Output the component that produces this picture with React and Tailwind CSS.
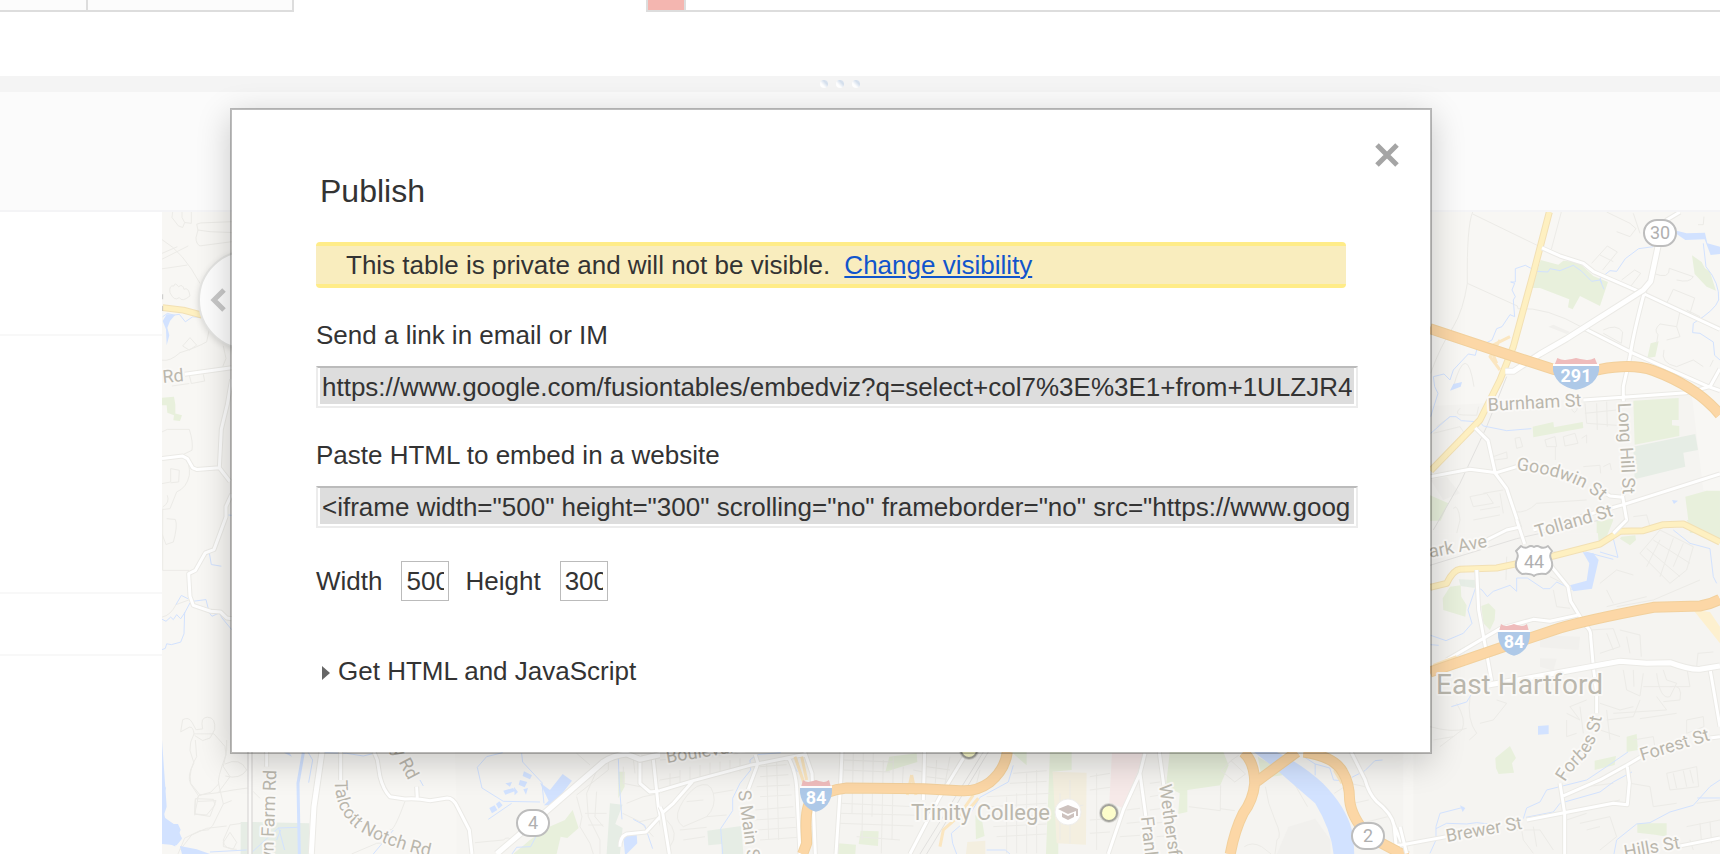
import React from "react";

const LINE = {
  minor: [["#ecebe7", 1]],
  stream: [["#d2e2ff", 1]],
  creek: [["#d2e2ff", 3]],
  rail: [["#e2e1df", 1]],
  street: [["#ebeae6", 5], ["#ffffff", 3]],
  avenue: [["#ebeae6", 7], ["#ffffff", 5]],
  ramp: [["#fbe6c0", 3]],
  yellow: [["#f2e0b4", 7], ["#fef0c1", 5]],
  highway: [["#f2d09c", 9], ["#fcd7a6", 7]],
  freeway: [["#f2d09c", 11], ["#fcd7a6", 9]],
};

function Line({ kind, d }) {
  return LINE[kind].map(([color, width]) => (
    <path
      key={color}
      d={d}
      fill="none"
      stroke={color}
      strokeWidth={width}
      strokeLinejoin="round"
      vectorEffect="non-scaling-stroke"
    />
  ));
}

const Park = ({ d }) => <path d={d} fill="#e8f0dc" />;
const Wood = ({ d }) => <path d={d} fill="#e6ede5" />;
const Water = ({ d }) => <path d={d} fill="#d2e2ff" />;
const Block = ({ d }) => <path d={d} fill="#f1f0ed" />;

function Label({ x, y, size = 18, rotate = 0, children }) {
  return (
    <text
      x={x}
      y={y}
      transform={`rotate(${rotate} ${x} ${y})`}
      fontSize={size}
      fill="#bab7ad"
      stroke="#faf9f7"
      strokeWidth="4"
      strokeLinejoin="round"
      paintOrder="stroke"
    >
      {children}
    </text>
  );
}

function CurvedLabel({ id, d, children }) {
  return (
    <>
      <path id={id} d={d} fill="none" />
      <text fontSize="18" fill="#bab7ad" stroke="#faf9f7" strokeWidth="4" strokeLinejoin="round" paintOrder="stroke">
        <textPath href={`#${id}`}>{children}</textPath>
      </text>
    </>
  );
}

function Interstate({ x, y, wide, children }) {
  return (
    <g transform={`translate(${x} ${y})`}>
      <g transform={wide ? "scale(.48 .333)" : "scale(.333)"}>
        <path d="M0 17H96V24H0Z" fill="#fff" />
        <path d="M4 18L9 0Q20 8 29 5Q40 4 48 0Q56 4 67 5Q76 8 87 0L92 18Z" fill="#efbcbc" />
        <path d="M0 24H96Q98 52 82 74Q68 90 48 95Q28 90 14 74Q-2 52 0 24Z" fill="#aec9e8" />
      </g>
      <text x={wide ? 23 : 16} y="24" textAnchor="middle" fontSize="18" fontWeight="700" fill="#fff">
        {children}
      </text>
    </g>
  );
}

function Route({ x, y, children }) {
  return (
    <g>
      <rect x={x - 16} y={y - 13} width="32" height="26" rx="13" fill="#fff" stroke="#bdbdbd" strokeWidth="2" />
      <text x={x} y={y + 6} textAnchor="middle" fontSize="18" fill="#b0b0b0">
        {children}
      </text>
    </g>
  );
}

function Marker({ x, y }) {
  return (
    <>
      <circle cx={x} cy={y} r="9" fill="none" stroke="#d5d4d0" strokeWidth="2" />
      <circle cx={x} cy={y} r="8" fill="#fdfdcb" stroke="#a3a39c" strokeWidth="2" />
    </>
  );
}

function WestMap() {
  return (
    <g transform="translate(150 200) scale(.3333 .4171)">
      <Line kind="minor" d="M68 28L66 42L85 62L98 66L104 54L124 56V28M104 54L96 42V28M140 58L152 55L245 52M140 58L144 72L180 76L245 78M144 72L138 90Q138 106 150 110L245 100M36 95Q100 125 150 200M36 142L115 110M36 165L112 156M36 128L82 112M60 222Q56 204 72 206Q74 196 86 208Q98 200 102 214Q116 208 120 230Q96 246 88 234Q72 244 60 222M36 384Q60 388 90 366Q140 354 170 340L178 310M98 350L120 330L140 348L118 360ZM220 350L228 380L218 400M118 420L124 440L164 434L160 418M66 446L118 440M36 556L52 550H118Q130 580 126 600L100 610M36 680L62 676V644L88 648L86 676L62 678M100 615Q122 630 118 660Q110 690 80 700L60 740L38 742M50 764L76 766Q84 780 70 820L48 826L36 800M52 708Q60 726 38 736M38 740V888H118M36 1000Q62 996 78 970L120 958M132 1280Q118 1300 120 1320L132 1350Q110 1380 122 1400L145 1428L182 1420L206 1400Q200 1390 228 1330L225 1310L192 1280ZM132 1280Q130 1262 118 1264L92 1275L98 1246Q116 1238 126 1252L138 1270L158 1268Q150 1240 172 1240Q198 1240 194 1270L180 1290L158 1296L134 1284M145 1428L142 1442L198 1440L180 1478L134 1472L142 1442M206 1400L220 1448L245 1440M220 1448L188 1500L175 1510L150 1512L104 1530L84 1568M220 1540L240 1516L260 1540L250 1556L220 1550Z" />
      <Park d="M36 474L72 472L76 490L76 512L96 516L90 530L70 528L72 516L52 510L50 492L36 492Z" />
      <Line kind="stream" d="M38 280L52 272L72 276L88 274L106 292L128 280L158 282M36 1005L48 1010L62 1000L70 1006L80 994L92 1004L104 990M104 990L120 966M78 970L94 948L114 956M104 988L102 1040L92 1060L64 1066L50 1064L46 1075L36 1078M130 962L168 958L178 990L186 998L208 990L216 1002L245 1030M178 846L184 874L214 878M245 756L232 755" />
      <Water d="M38 290L50 274L76 275L60 290L52 306L58 324L50 348L48 310ZM36 1352L42 1370L40 1400L48 1410L40 1430L42 1470L50 1496H84L92 1510L86 1522L96 1530L78 1528L76 1550L36 1536ZM90 1550L140 1562L180 1580H100Z" />
      <Line kind="street" d="M104 418L245 402M36 620L98 614L112 620L128 642L140 646L208 642L240 675M245 430L232 490L214 550L208 642M245 705L228 735V760L192 838L166 846L136 888L116 896L120 950L130 972L182 986L212 988L230 1002L245 1004" />
      <Line kind="yellow" d="M38 258L100 264L156 276" />
      <path d="M38 226V238M38 254V266" stroke="#b8b8b8" strokeWidth="2" />
    </g>
  );
}

function SouthWestMap() {
  return (
    <g transform="translate(160 740) scale(.3333)">
      <path d="M890 205L885 36H1560V342H890Z" fill="#f6f5f2" />
      <Wood d="M242 246H280L448 250V342H242Z" />
      <Wood d="M1350 190L1388 194L1366 252L1388 264L1380 342H1340Z" />
      <Park d="M1375 95H1394V140L1375 175ZM1165 262L1215 240L1238 210L1256 264L1222 294L1202 290L1190 342H1060L1110 300Z" />
      <Line kind="minor" d="M106 0L110 50Q85 90 92 130L120 165L175 158L210 110L190 80L200 30V0M195 72Q240 50 260 90Q240 120 196 108M106 176L160 178L165 195L140 225L104 222ZM120 165L106 180L104 226M175 158L220 150L264 144M245 250L210 255L190 300Q190 330 230 328M60 330L95 285L140 265L200 258M280 155L300 175M735 184Q700 280 690 268M575 342L650 310L700 308M945 308L1030 300Q1045 285 1060 306L1045 320M1250 170L1266 230L1260 260L1290 310L1300 342M1280 160L1285 230L1320 300V342M1310 155L1305 230L1330 260M1345 60V90L1250 165M1320 70L1280 160M1275 220H1340M1285 255H1330M1390 80V130L1440 140M1400 190L1450 170L1500 160M1388 220L1440 245L1500 230M1440 245L1480 290M1500 120L1520 200L1560 220M1420 55L1425 100M1250 40L1290 75" />
      <Line kind="stream" d="M490 38L560 40L610 48L650 38M445 38L458 60L446 128M270 342L355 264L416 262M150 336L260 330M356 264L374 330M362 270L350 300M1028 38L980 50L952 82L966 144L1030 184L1140 186M985 238L1055 190M1085 40L1088 66L1146 128L1152 190M1375 50L1378 130L1386 238M1056 342L1070 322L1112 320L1128 290M1420 238L1454 256L1478 326M640 342L700 270M780 120L790 138" />
      <Line kind="creek" d="M430 38L414 130L418 342" />
      <Water d="M6 0L20 200L10 230L50 258L66 296L50 316L6 312ZM60 318L110 328L150 342H70ZM1140 128L1170 150L1208 102L1236 122L1180 196L1152 196L1166 182ZM1390 290L1430 280L1432 310L1400 342H1395ZM1092 94L1116 106L1110 118L1088 108ZM1080 120L1102 126L1094 142L1076 134ZM1036 130L1056 126L1050 140ZM1030 152L1060 144L1064 154L1036 164ZM1062 140L1074 156L1064 166ZM1090 148L1104 144L1098 164ZM988 204L1004 196L1012 210L996 220ZM1008 192L1018 184L1028 196L1016 206ZM372 38L396 50L388 38Z" />
      <path d="M270 36V342" stroke="#dcdbd9" strokeWidth="16" />
      <path d="M270 36V342" stroke="#fbfaf8" strokeWidth="8" />
      <Line kind="avenue" d="M486 36L462 200L454 342" />
      <Line kind="street" d="M320 36V80M542 36V120M642 36L652 60L660 110Q670 150 690 170L735 177Q770 174 810 182L862 174Q880 174 892 200L928 270L936 342M772 176L770 140M1440 44V130L1470 156L1490 154L1560 136M1478 38L1495 200L1525 342M1560 165L1458 276L1400 282Q1380 290 1380 320" />
      <Line kind="avenue" d="M1010 342L1150 222L1330 66Q1360 46 1400 42L1440 58L1560 30" />
    </g>
  );
}

function SouthMap() {
  return (
    <g transform="translate(660 740) scale(.3333)">
      <path d="M0 36H1560V342H0Z" fill="#f5f4f1" />
      <Wood d="M142 272L244 258L250 342H185L186 312L145 316Z" />
      <Park d="M688 50L770 40L772 66L720 82L676 96ZM602 272L656 274L654 318L596 312ZM535 310L588 314L586 342H532ZM946 225L966 240L974 288L948 298ZM1170 36H1235V90L1178 95L1195 160V342H1158ZM1054 36H1100V76Z" />
      <path d="M1178 95L1280 98L1278 314L1190 310ZM922 306L976 302V342H918Z" fill="#f4efe0" />
      <path d="M1356 40H1455L1390 205L1348 188Z" fill="#f6e9e8" />
      <Line kind="minor" d="M0 120L60 110M30 100V140M60 90V130M90 80V122M120 75V115M150 68V108M180 65V105M210 60V100M240 55V95M0 60L240 40M110 140Q150 120 160 160T140 230L70 260Q40 240 60 200T110 140M160 160L220 150M130 180L80 185M140 230L200 225M20 240Q60 280 30 320M60 270L140 262M70 300L135 290M300 80L380 74M300 110L385 104M290 140L390 135M300 170L395 165M320 66L326 300M350 60L356 300M286 210L400 200M284 240L405 232M290 270L410 262M300 300L415 292M550 60L700 66M550 90L690 96M580 40L576 220M610 40L606 300M640 40L636 230M670 60L664 340M700 50L696 300M545 190L760 200M540 220L780 226M540 250L760 258M590 290L720 300M730 80L726 160M760 90L790 96M800 80L870 90M800 110L860 118M830 60L826 130M870 50L850 160M960 90L950 130M980 170L1170 160M990 200L1160 190M1000 230L1160 226M1000 260L1160 252M1010 290L1160 282M1040 170V340M1070 160V340M1100 100V340M1130 90V340M1060 100L1160 92M1050 130L1160 124M1200 160V300M1230 120V310M1200 200L1270 196M1290 110L1350 100M1290 150L1350 142M1290 240L1350 236M1290 280L1350 276M1310 100V330M1400 210L1440 205M1400 250L1440 246M1380 290L1440 286M1470 130L1500 126M1470 170L1495 166M1470 210L1500 206M1480 250L1520 246M1490 290L1540 286" />
      <Line kind="rail" d="M970 36L780 342M985 36L800 342" />
      <Line kind="stream" d="M390 52L412 96M408 48L418 84M362 38L290 44L270 60L272 90L240 130L218 175V212L182 266L188 342M458 200V280M1060 76L1045 126L960 172L920 240L874 280L878 310L890 342M980 330H1036L1050 342" />
      <Line kind="street" d="M0 152L100 122L270 76L440 42M98 124L40 190L8 218L0 200M8 218L28 342M286 44L294 70L262 156M384 50Q406 90 410 140L420 342M434 36L456 100L466 342M546 36L542 130L528 342M794 36L790 180M918 42L840 170L750 342M1455 40L1440 100L1390 210L1345 342M1440 100L1458 232M1498 36L1512 140" />
      <Line kind="ramp" d="M405 50L432 130M425 50L440 120M755 105L768 165M755 105L742 165M940 165L895 230L850 270L840 320M955 175L900 240" />
      <Line kind="freeway" d="M1042 36Q1035 90 988 128Q950 156 900 152L790 146L560 144Q530 146 500 158M450 190Q438 200 438 260L440 310L428 342" />
    </g>
  );
}

function SouthCentralMap() {
  return (
    <g transform="translate(1120 740) scale(.3827 .3333)">
      <path d="M157 36H740V342H157Z" fill="#f5f4f1" />
      <Park d="M130 36H270L284 76L262 136L176 150V216L152 222L156 160L120 140Z" />
      <Park d="M360 50L420 90L424 106L370 114Z" />
      <Block d="M440 260L510 236L550 300V342H410Z" />
      <Line kind="minor" d="M263 136L262 212L180 200M262 206L300 212M264 92L290 62L328 102L300 126L264 92M290 62L310 46M380 140Q385 190 405 240T410 300L405 342M325 320Q345 304 370 320L395 342M560 160L600 130L640 140M610 190L650 180M630 250L700 230M430 80L490 200" />
      <Water d="M350 36H410Q480 76 530 130Q590 200 606 270Q612 310 612 342H558Q552 270 510 190Q450 130 400 80Z" />
      <Line kind="stream" d="M480 50L510 72V106M510 72L548 84L558 120L600 124M606 112L640 92L666 62L686 60M826 342L815 342" />
      <Line kind="street" d="M604 36L640 118Q650 160 670 184Q710 220 716 256L722 324M716 256L740 320L750 342M720 318L740 312" />
      <Line kind="ramp" d="M570 110L600 135M560 90L580 130" />
      <Line kind="freeway" d="M322 36Q352 66 352 130Q348 180 322 220Q300 270 288 342M462 36L358 124" />
      <Line kind="freeway" d="M480 36Q560 50 582 96Q600 130 600 180Q604 230 648 288L750 350" />
    </g>
  );
}

function NorthEastMap() {
  return (
    <g transform="translate(1400 200) scale(.3333)">
      <path d="M90 618L875 580L910 870L960 880V1000H90Z" fill="#f5f4f1" />
      <Park d="M422 180L475 194L490 182L535 186L580 228L624 246L600 318L540 288L518 328L504 322L508 298L420 264L396 264ZM876 166L905 186L915 205L930 215L948 272L920 260L884 222ZM752 430L776 424L766 470L742 474ZM398 680L460 666L462 682L548 666L550 684L400 712ZM700 602L836 594V660L816 660V676L838 678V708L704 734ZM90 886L145 910L122 962H90ZM856 890L920 872H960V1000H870ZM590 962L640 956L620 1000H590Z" />
      <Wood d="M700 740L886 702L894 750L850 758L856 800L704 838Z" />
      <Block d="M445 380L460 374L510 396L500 402ZM92 840L140 830L180 880L130 900Z" />
      <Line kind="minor" d="M218 36Q200 80 202 250Q190 330 160 380Q120 440 92 520M218 42L428 144M202 250L352 318L354 326Q440 320 550 384M484 36L454 148M160 560Q200 420 222 560M620 36L690 70L708 86L690 110L650 95M700 40L720 100M894 74L910 74L912 50M575 190L622 138L652 156L608 210M600 165L640 185M665 240L704 210L722 220L690 262M760 220Q810 240 808 205L880 230Q870 250 830 240M800 310L820 268L884 294L870 340L840 335L830 380L780 372Q760 390 774 404L770 430M830 380L840 410L800 420M792 450Q780 490 830 500L880 480L910 500M610 390Q650 370 668 396L664 430L610 400M555 610L560 670L650 676M590 610L592 690M620 605L622 680M555 640L650 630M490 710L525 700L534 730L495 738ZM545 715L560 705V730M435 720L465 710L470 740H440ZM466 740V780M345 715L360 712L368 740L350 745ZM280 770L320 756L322 775L285 780M550 800L600 796L602 820M610 800L630 790L634 810M210 890L260 880L280 910L220 920ZM240 930L300 920M250 880L310 870M160 925Q175 910 180 960L170 1000M220 960L300 945M300 880L310 940M345 936Q380 940 410 910L560 900M500 990L520 960L560 955M690 910L760 890M700 950L740 945L750 980M860 330L900 350M930 500L940 480M100 700L180 680L200 710M110 680L150 650M180 625Q160 645 190 645L230 646L236 620M510 615Q525 660 535 615" />
      <Line kind="rail" d="M320 530L260 680L180 850L100 990" />
      <Line kind="stream" d="M344 350L340 300L346 290L336 270L344 250L332 246H346V206L376 196L410 214L444 216L450 206L480 212L520 196L545 214L575 244L600 240L612 268M606 250L600 236L630 212L650 214L676 176L716 146L760 140M344 350L330 344L306 380L290 386L276 420L256 430L230 450L226 466L205 462L160 510L150 540L132 522L100 530L104 560L114 580L92 650M910 130L918 200Q960 250 956 300Q946 330 880 370L878 398L900 400L940 426L944 466L960 480M92 700L150 650L168 650L184 662L240 666L250 678L320 692L394 686" />
      <Water d="M830 92L860 100L915 98L922 130L960 140V162L932 165L914 118L856 120L830 102ZM150 572L160 552L186 546L182 560ZM816 900L834 902L822 912Z" />
      <Line kind="yellow" d="M448 36L400 220L340 440L300 540L240 660L92 812" />
      <Line kind="ramp" d="M270 440L330 410M270 440L290 490M300 420L270 470L300 510" />
      <Line kind="street" d="M426 144L480 168L550 190L582 216L720 276L960 388M550 384L700 460L920 558L960 572M840 36L800 60L780 90M735 270Q700 400 690 470L670 560V604M676 840L668 890L680 960L650 990M550 600L860 578L930 560L960 506M226 684L264 722L286 820L320 866L360 985M92 830L210 808L290 818L350 800M600 870L630 888L668 892M400 990L670 914L960 822" />
      <Line kind="avenue" d="M776 130L752 244L730 270L500 416L420 462L340 514H316" />
      <Line kind="freeway" d="M90 386L300 456L460 508Q540 524 600 508Q700 490 760 512Q890 560 960 644" />
    </g>
  );
}

function SouthEastMap() {
  return (
    <g transform="translate(1400 520) scale(.3333)">
      <path d="M90 40H960V1002H40V700H90Z" fill="#f5f4f1" />
      <Park d="M590 0H640L620 50L596 66ZM860 0H960V70L870 20ZM664 50L706 46L708 60L690 76L660 56ZM150 200L182 196L184 230L200 256L196 290L130 270L128 235ZM244 258L266 250L286 270L284 300L270 330L250 310ZM286 714L330 678L348 714L336 730L342 758L296 762L288 745ZM680 650L710 642L714 690L680 696ZM584 722L648 708L644 735L584 750ZM712 910H800V950L766 944L712 938Z" />
      <Wood d="M176 178L228 180L224 204L182 198Z" />
      <Block d="M420 346L540 350L536 390L420 382ZM420 415L470 416L460 452L420 440Z" />
      <Line kind="minor" d="M720 100L780 30L880 80L860 150L810 190ZM740 85L840 170M760 60L870 130M780 60L740 140M820 55L780 170M850 70L820 140M600 190L650 150L700 165M620 210L640 250M450 170L500 195M460 210L470 260L510 265M570 330L640 326L660 380L600 400M620 340L640 390M660 330L720 345L724 410M680 350L690 400M670 450L680 510L720 528L730 460M700 450L702 500M770 460Q780 540 810 530L830 490L800 480L790 450M810 500Q850 490 840 540L790 545M500 580L540 600L510 560L560 540M600 550L660 570L700 560M620 600L700 590L720 540M500 600V650L530 640M540 560L550 640M600 630L660 650M620 570L630 660M640 580L800 570L770 530M720 596L830 580M730 500L870 500L860 440M890 440L894 400L940 396M860 600L910 590L912 620L860 640ZM800 760L890 740L896 800L810 810ZM820 760L830 805M850 752L860 800M870 750L880 790M690 790L750 800L760 860L830 850M700 660L760 650L770 720M560 800L640 790M570 860L660 840M540 910L630 890L650 950L600 990M560 930L600 920M340 930L420 930L460 990M360 900L370 960L400 1000M400 920L410 980M500 900L560 880M860 920L960 900M870 960L880 990M890 850L960 840M900 910L905 970M930 905L935 970M170 550Q200 600 186 630L120 680M210 530Q200 600 230 640L208 660M290 540L320 550L280 600L240 610M90 620Q160 640 200 625M100 660L160 650M270 410L300 400M320 110L318 180M420 90L500 100M650 260L760 240L900 180M620 260L740 230" />
      <Line kind="rail" d="M90 136L350 56L600 0" />
      <Line kind="stream" d="M230 200L246 210L262 230L280 214L330 196L350 214V174L382 174L430 206L450 206L470 186L520 210M556 96L640 118M640 56L654 112L600 96M92 346L138 362L190 340L216 310L204 270L228 200M92 374L116 376M820 30L870 70L930 86L940 170L950 190M154 560L200 546L216 520M684 696L620 740L560 780L440 810L420 846L380 864L370 896M696 756L640 786L600 816L480 850L460 876L378 892M120 880L190 862M120 880L108 920V960L90 1000M108 926L140 910L200 912L230 908L300 916M960 780L930 800L880 856L810 876L750 908L710 912L650 960L642 1002M892 834H960" />
      <Water d="M548 96L580 100L596 120L576 206L520 214L510 196L560 182L568 130ZM414 618L446 616V642L414 644ZM180 856L196 864L188 876Z" />
      <Line kind="yellow" d="M90 202L140 190Q160 150 180 148L290 144L460 108L600 72L660 34L730 32L790 14L850 12L960 66" />
      <Line kind="street" d="M350 0L374 72M200 90L320 30L356 22M455 140L504 200L512 244L556 316Q574 330 572 350L580 440L590 520V580M230 150L236 270L278 500M140 420L300 326L400 298L450 304L540 284M640 40L680 0M480 790L494 880V1002M490 828L600 780L680 736L730 706M682 740L688 788L682 854L640 850L380 900M0 976L140 950M930 654L960 650M0 920L20 1000M930 446L960 620M830 980L960 954" />
      <Line kind="avenue" d="M260 496L420 468L660 424L740 430L810 428Q870 450 900 448L960 438" />
      <path d="M880 270L930 276L960 320V370Z" fill="#fdf0cf" />
      <Line kind="ramp" d="M100 436L170 410" />
      <Line kind="freeway" d="M90 456L300 384L480 324Q560 300 760 262L900 258Q930 254 960 238" />
    </g>
  );
}

function MapCanvas() {
  return (
    <svg
      viewBox="162 212 1558 642"
      preserveAspectRatio="xMinYMin slice"
      className="absolute inset-0 h-full w-full font-['Roboto',sans-serif]"
      role="img"
      aria-label="Map"
    >
      <rect x="162" y="212" width="1558" height="642" fill="#f8f7f4" />
      <WestMap />
      <SouthWestMap />
      <SouthMap />
      <SouthCentralMap />
      <NorthEastMap />
      <SouthEastMap />

      <Label x={163} y={383} rotate={-5}>Rd</Label>
      <Label x={273} y={865} rotate={-88}>wn Farm Rd</Label>
      <Label x={382} y={731} rotate={62}>ntry Rd</Label>
      <CurvedLabel id="talcott" d="M335 780Q334 812 358 830Q395 852 450 860">Talcott Notch Rd</CurvedLabel>
      <Label x={667} y={763} rotate={-9}>Boulevard</Label>
      <Label x={738} y={791} rotate={82}>S Main St</Label>
      <Label x={627} y={878} rotate={-84}>Rd</Label>
      <Label x={911} y={820} size={22}>Trinity College</Label>
      <Label x={1159} y={785} rotate={82}>Wethersfield</Label>
      <Label x={1141} y={817} rotate={84}>Franklin</Label>
      <Label x={1488} y={411} rotate={-3}>Burnham St</Label>
      <Label x={1618} y={403} rotate={87}>Long Hill St</Label>
      <CurvedLabel id="goodwin" d="M1516 470Q1555 474 1581 487Q1597 496 1610 509">Goodwin St</CurvedLabel>
      <Label x={1537} y={538} rotate={-16}>Tolland St</Label>
      <Label x={1419} y={560} rotate={-11}>Park Ave</Label>
      <Label x={1436} y={694} size={28}>East Hartford</Label>
      <CurvedLabel id="forbes" d="M1565 782Q1572 770 1586 757Q1598 740 1602 716">Forbes St</CurvedLabel>
      <Label x={1642} y={761} rotate={-17}>Forest St</Label>
      <Label x={1447} y={842} rotate={-10}>Brewer St</Label>
      <Label x={1625} y={858} rotate={-10}>Hills St</Label>

      <Interstate x={1553} y={358} wide>291</Interstate>
      <Interstate x={1498} y={624}>84</Interstate>
      <Interstate x={800} y={780}>84</Interstate>
      <Route x={1660} y={233}>30</Route>
      <Route x={533} y={823}>4</Route>
      <Route x={1368} y={836}>2</Route>
      <g>
        <path
          d="M1521 546Q1525 549 1528 547Q1531 545 1534 547Q1537 545 1540 547Q1544 549 1548 546L1552 551Q1549 555 1551 559Q1555 569 1546 574Q1537 573 1534 576Q1531 573 1522 574Q1513 569 1517 559Q1519 555 1516 551Z"
          fill="#fff"
          stroke="#bdbdbd"
          strokeWidth="2"
          strokeLinejoin="round"
        />
        <text x="1534" y="568" textAnchor="middle" fontSize="18" fill="#b0b0b0">44</text>
      </g>
      <circle cx="1068" cy="812" r="13" fill="#fff" stroke="#efeeec" strokeWidth="1" />
      <path d="M1058 809L1068 805L1078 809V816H1076V811L1068 814ZM1062 813L1068 816L1074 813V817L1068 820L1062 817Z" fill="#cdc2be" />
      <Marker x={969} y={750} />
      <Marker x={1109} y={813} />
    </svg>
  );
}

function EmbedField({ id, label, value }) {
  return (
    <div className="flex w-[calc(100%+12px)] flex-col gap-3.5">
      <label htmlFor={id} className="leading-[34px]">{label}</label>
      <input
        id={id}
        readOnly
        defaultValue={value}
        className="h-[42px] w-full rounded-none border-2 border-[#ececec] border-t-[#bbbbbb] bg-[#dddddd] px-1 py-0 leading-8 shadow-[inset_2px_0_#ffffff,inset_-2px_0_#ffffff,inset_0_-2px_#ffffff] outline-none"
      />
    </div>
  );
}

function SizeField({ id, label, value }) {
  return (
    <div className="flex items-center gap-[19px]">
      <label htmlFor={id}>{label}</label>
      <input
        id={id}
        defaultValue={value}
        className="h-10 w-12 rounded-none border border-[#bbbbbb] bg-white px-1 py-0 outline-none"
      />
    </div>
  );
}

function PublishDialog() {
  return (
    <section
      role="dialog"
      aria-labelledby="publish-title"
      className="absolute top-[108px] right-72 left-[230px] border-2 border-black/25 bg-white bg-clip-padding px-[84px] pt-[61px] pb-[65px] text-[26px] leading-8 text-[#333333] shadow-[0_8px_32px_rgba(0,0,0,0.2)]"
    >
      <button type="button" aria-label="Close" className="absolute top-[31px] right-[29px] p-0.5">
        <svg viewBox="0 0 24 24" className="h-6 w-6" fill="none" stroke="#a5a5a5" strokeWidth="5">
          <path d="M2 2L22 22M22 2L2 22" />
        </svg>
      </button>
      <h1 id="publish-title" className="pl-1 text-[32px] leading-10">Publish</h1>
      <p className="mt-[31px] rounded border-y-4 border-[#ffec88] bg-[#f9edbe] px-[30px] leading-[38px]">
        This table is private and will not be visible.{" "}
        <a href="#visibility" className="ml-[7px] text-[#1155cc] underline decoration-2 underline-offset-2">
          Change visibility
        </a>
      </p>
      <form className="mt-[30px]">
        <div className="flex flex-col gap-[30px]">
          <EmbedField
            id="link"
            label="Send a link in email or IM"
            value="https://www.google.com/fusiontables/embedviz?q=select+col7%3E%3E1+from+1ULZJR4"
          />
          <EmbedField
            id="embed"
            label="Paste HTML to embed in a website"
            value={'<iframe width="500" height="300" scrolling="no" frameborder="no" src="https://www.goog'}
          />
        </div>
        <div className="mt-[33px] flex gap-4">
          <SizeField id="width" label="Width" value="500" />
          <SizeField id="height" label="Height" value="300" />
        </div>
      </form>
      <button type="button" className="mt-[54px] flex items-center gap-2 pl-1.5">
        <svg viewBox="0 0 8 14" className="mt-1 h-3.5 w-2" fill="#666666">
          <path d="M0 0L8 7L0 14Z" />
        </svg>
        Get HTML and JavaScript
      </button>
    </section>
  );
}

function Grip() {
  return <span className="h-2 w-2 rounded-sm bg-linear-to-tr from-white from-35% via-[#d3deec] via-70% to-[#e4eaf2]" />;
}

export default function App() {
  return (
    <main className="relative flex min-h-screen flex-col overflow-hidden bg-white font-['Liberation_Sans',Arial,sans-serif]">
      <div className="flex h-3 shrink-0">
        <div className="w-22 border-r-2 border-b-2 border-[#dddddd] bg-[#fcfcfc]" />
        <div className="w-[206px] border-r-2 border-b-2 border-[#dddddd] bg-[#fcfcfc]" />
        <div className="w-88" />
        <div className="w-10 border-x-2 border-b-2 border-[#dddddd] bg-[#f4b6b0]" />
        <div className="flex-1 border-b-2 border-[#dddddd]" />
      </div>
      <div className="h-16 shrink-0" />
      <div className="flex h-4 shrink-0 items-center gap-2 bg-[#f4f4f4] pl-[820px]">
        <Grip />
        <Grip />
        <Grip />
      </div>
      <div className="h-30 shrink-0 border-b-2 border-[#f4f4f6] bg-[#fbfbfb]" />
      <div className="flex flex-1">
        <aside className="w-[162px] shrink-0">
          <div className="h-31 border-b-2 border-[#f8f8f8]" />
          <div className="h-[258px] border-b-2 border-[#f8f8f8]" />
          <div className="h-[62px] border-b-2 border-[#f8f8f8]" />
        </aside>
        <div className="relative flex-1 overflow-hidden">
          <MapCanvas />
          <button
            type="button"
            aria-label="Collapse panel"
            className="absolute top-[38px] left-9 flex h-25 w-25 items-center rounded-full border-2 border-[#e4e4e2] bg-[#fdfdfd] pl-2.5 shadow-[0_2px_6px_rgba(0,0,0,0.12)]"
          >
            <svg viewBox="0 0 16 24" className="h-6 w-4" fill="none" stroke="#c8c8c8" strokeWidth="5">
              <path d="M14 2L4 12L14 22" />
            </svg>
          </button>
        </div>
      </div>
      <PublishDialog />
    </main>
  );
}
